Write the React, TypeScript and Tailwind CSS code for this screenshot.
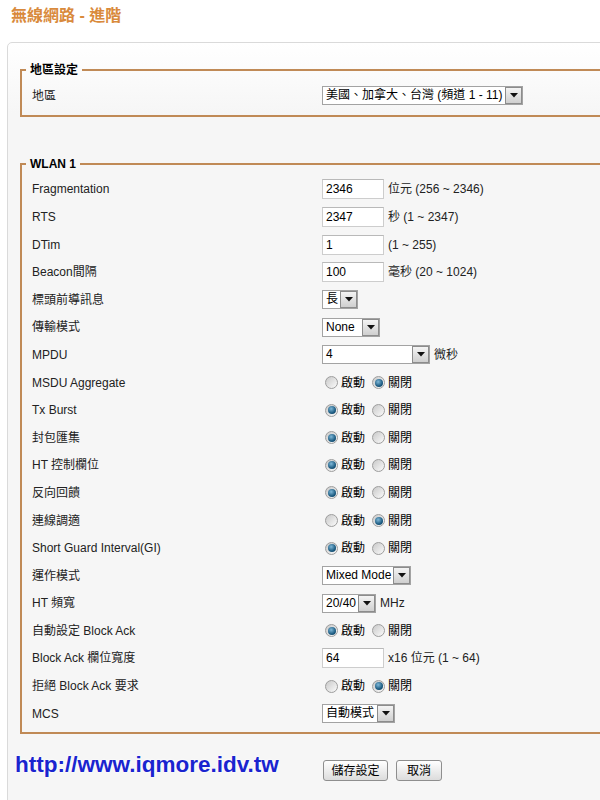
import React from "react";

type Row =
  | { label: string; kind: "input"; value: string; unit?: string }
  | { label: string; kind: "select"; value: string; w: number; unit?: string; unitGap?: number }
  | { label: string; kind: "radio"; on: boolean };

const rows: Row[] = [
  { label: "Fragmentation", kind: "input", value: "2346", unit: "位元 (256 ~ 2346)" },
  { label: "RTS", kind: "input", value: "2347", unit: "秒 (1 ~ 2347)" },
  { label: "DTim", kind: "input", value: "1", unit: "(1 ~ 255)" },
  { label: "Beacon間隔", kind: "input", value: "100", unit: "毫秒 (20 ~ 1024)" },
  { label: "標頭前導訊息", kind: "select", value: "長", w: 36 },
  { label: "傳輸模式", kind: "select", value: "None", w: 58 },
  { label: "MPDU", kind: "select", value: "4", w: 108, unit: "微秒" },
  { label: "MSDU Aggregate", kind: "radio", on: false },
  { label: "Tx Burst", kind: "radio", on: true },
  { label: "封包匯集", kind: "radio", on: true },
  { label: "HT 控制欄位", kind: "radio", on: true },
  { label: "反向回饋", kind: "radio", on: true },
  { label: "連線調適", kind: "radio", on: false },
  { label: "Short Guard Interval(GI)", kind: "radio", on: true },
  { label: "運作模式", kind: "select", value: "Mixed Mode", w: 89 },
  { label: "HT 頻寬", kind: "select", value: "20/40", w: 54, unit: "MHz" },
  { label: "自動設定 Block Ack", kind: "radio", on: true },
  { label: "Block Ack 欄位寬度", kind: "input", value: "64", unit: "x16 位元 (1 ~ 64)" },
  { label: "拒絕 Block Ack 要求", kind: "radio", on: false },
  { label: "MCS", kind: "select", value: "自動模式", w: 73 },
];

function Select({ value, w }: { value: string; w: number }) {
  return (
    <div
      className="flex h-[19px] items-center border border-[#a3a3a3] bg-white"
      style={{ width: w }}
    >
      <span className="flex-1 truncate pl-[3px] text-[12px] leading-[17px] text-black">{value}</span>
      <span className="flex h-[17px] w-[17px] items-center justify-center border border-[#8c8c8c] bg-gradient-to-b from-[#f4f4f4] to-[#cfcfcf]">
        <svg width="8" height="5" viewBox="0 0 8 5">
          <path d="M0 0H8L4 4.5Z" fill="#111" />
        </svg>
      </span>
    </div>
  );
}

function Radio({ on }: { on: boolean }) {
  return (
    <span className="flex h-[13px] w-[13px] items-center justify-center rounded-full border border-[#9d9d9d] bg-gradient-to-br from-[#c9c9c9] to-[#fbfbfb]">
      {on && (
        <span className="h-[8px] w-[8px] rounded-full bg-[radial-gradient(circle_at_40%_35%,#7fb8d8,#1d5c82_60%,#0f3a57)]" />
      )}
    </span>
  );
}

function RadioPair({ on }: { on: boolean }) {
  return (
    <div className="flex items-center text-[12px] text-black">
      <span className="ml-[3px]">
        <Radio on={on} />
      </span>
      <span className="ml-[3px]">啟動</span>
      <span className="ml-[7px]">
        <Radio on={!on} />
      </span>
      <span className="ml-[3px]">關閉</span>
    </div>
  );
}

function Field({ row }: { row: Row }) {
  if (row.kind === "input") {
    return (
      <div className="flex items-center">
        <div className="flex h-[20px] w-[62px] items-center border border-[#cdcdcd] border-t-[#b9b9b9] bg-white pl-[3px] text-[12px] text-black">
          {row.value}
        </div>
        {row.unit && <span className="ml-[4px] text-[12px] text-[#222]">{row.unit}</span>}
      </div>
    );
  }
  if (row.kind === "select") {
    return (
      <div className="flex items-center">
        <Select value={row.value} w={row.w} />
        {row.unit && <span className="ml-[4px] text-[12px] text-[#222]">{row.unit}</span>}
      </div>
    );
  }
  return <RadioPair on={row.on} />;
}

function FormRow({ label, children }: { label: string; children: React.ReactNode }) {
  return (
    <div className="grid h-[27.6px] grid-cols-[290px_1fr] items-center">
      <span className="text-[12px] text-[#222]">{label}</span>
      <div>{children}</div>
    </div>
  );
}

function Group({ title, children, className = "" }: { title: string; children: React.ReactNode; className?: string }) {
  return (
    <fieldset
      className={`ml-[12px] w-[640px] border-2 border-[#c08a56] pl-[4px] pb-[5px] ${className}`}
    >
      <legend className="px-[4px] text-[12px] font-bold leading-[14px] text-black">{title}</legend>
      <div className="pl-[6px] pt-[5px]">{children}</div>
    </fieldset>
  );
}

export default function App() {
  return (
    <div
      className="relative h-[800px] w-[600px] overflow-hidden bg-white"
      style={{ fontFamily: '"Liberation Sans", Arial, "Noto Sans CJK TC", sans-serif' }}
    >
      <div className="h-[42px] pl-[11px] pt-[6px]">
        <h1 className="text-[16px] font-bold leading-[20px] text-[#d98a3c]">無線網路 - 進階</h1>
      </div>
      <div className="ml-[7px] h-[800px] w-[640px] rounded-[5px] border border-[#dadada] bg-[linear-gradient(#ffffff,#f6f6f6_70px)] pt-[20px]">
        <Group title="地區設定">
          <FormRow label="地區">
            <Select value="美國、加拿大、台灣 (頻道 1 - 11)" w={201} />
          </FormRow>
        </Group>
        <Group title="WLAN 1" className="mt-[40px]">
          {rows.map((r) => (
            <FormRow key={r.label} label={r.label}>
              <Field row={r} />
            </FormRow>
          ))}
        </Group>
        <div className="mt-[20px] grid grid-cols-[315px_auto] items-start">
          <div
            className="pl-[7px] text-[22.5px] font-bold leading-[22px] text-[#1a24cf] [text-shadow:0_0_2px_#fff,0_0_3px_#fff]"
          >
            http://www.iqmore.idv.tw
          </div>
          <div className="mt-[6px] flex gap-[8px]">
            <button className="h-[21px] w-[65px] rounded-[3px] border border-[#8e8e8e] bg-gradient-to-b from-white to-[#dcdcdc] text-[12px] text-black">
              儲存設定
            </button>
            <button className="h-[21px] w-[46px] rounded-[3px] border border-[#8e8e8e] bg-gradient-to-b from-white to-[#dcdcdc] text-[12px] text-black">
              取消
            </button>
          </div>
        </div>
      </div>
    </div>
  );
}
